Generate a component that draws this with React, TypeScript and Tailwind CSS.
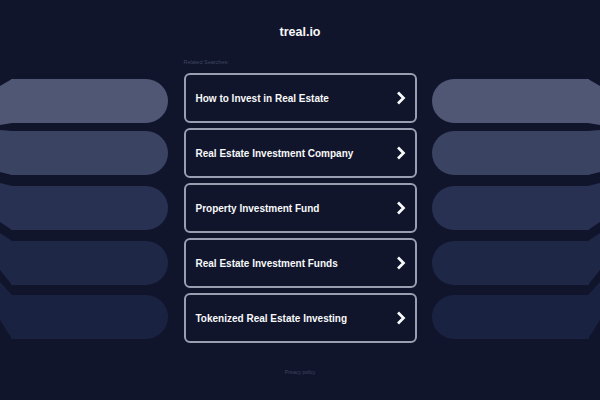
const searches = [
  'How to Invest in Real Estate',
  'Real Estate Investment Company',
  'Property Investment Fund',
  'Real Estate Investment Funds',
  'Tokenized Real Estate Investing',
];

// tab = where the slanted end meets the window edge, relative to the pill top
const pills = [
  { bg: 'bg-[#4f5775]', fill: '#4f5775', mt: 'mt-0', top: 7, bottom: 46 },
  { bg: 'bg-[#3b4363]', fill: '#3b4363', mt: 'mt-[8px]', top: -1, bottom: 41 },
  { bg: 'bg-[#293152]', fill: '#293152', mt: 'mt-[11px]', top: -3, bottom: 36 },
  { bg: 'bg-[#1f2747]', fill: '#1f2747', mt: 'mt-[11px]', top: -8, bottom: 29 },
  { bg: 'bg-[#1a2242]', fill: '#1a2242', mt: 'mt-[10px]', top: -13, bottom: 25 },
];

const SidePills = ({ side }: { side: 'left' | 'right' }) => {
  const isLeft = side === 'left';
  return (
    <div className="w-[168px] pt-[22px]">
      {pills.map((pill) => (
        <div key={pill.fill} className={`relative h-[44px] ${pill.mt} ${isLeft ? 'pl-[11px]' : 'pr-[11px]'}`}>
          <div className={`h-full ${pill.bg} ${isLeft ? 'rounded-r-[22px]' : 'rounded-l-[22px]'}`} />
          <svg
            className={`absolute top-0 overflow-visible ${isLeft ? 'left-0' : 'right-0'}`}
            width="12"
            height="44"
            viewBox="0 0 12 44"
          >
            <polygon
              fill={pill.fill}
              points={
                isLeft
                  ? `0,${pill.top} 12,0 12,44 0,${pill.bottom}`
                  : `12,${pill.top} 0,0 0,44 12,${pill.bottom}`
              }
            />
          </svg>
        </div>
      ))}
    </div>
  );
};

const App = () => {
  return (
    <div className="flex h-[400px] w-[600px] flex-col items-center overflow-hidden bg-[#10152b] font-['Liberation_Sans',Arial,sans-serif]">
      <h1 className="mt-[24px] h-[16px] text-[12.5px] leading-[16px] font-bold text-[#f8f9fa]">treal.io</h1>

      <div className="mt-[17px] flex w-full justify-between">
        <SidePills side="left" />

        <div className="w-[233px]">
          <p className="h-[16px] text-[5.5px] leading-[10px] text-[#3f4660]">Related Searches:</p>
          <div className="flex flex-col gap-[5px]">
            {searches.map((label) => (
              <a
                key={label}
                className="flex h-[50px] items-center justify-between rounded-[6px] border-2 border-[#999eb1] pr-[9px] pl-[10px] text-[10px] font-bold text-[#f8f9fa]"
              >
                <span>{label}</span>
                <svg width="10" height="14" viewBox="0 0 10 14" fill="none" stroke="#f8f9fa" strokeWidth="2.7">
                  <path d="M2 1.5 7.5 7 2 12.5" />
                </svg>
              </a>
            ))}
          </div>
        </div>

        <SidePills side="right" />
      </div>

      <p className="mt-[25px] text-[5px] leading-[8px] text-[#3f4660]">Privacy policy</p>
    </div>
  );
};

export default App;
